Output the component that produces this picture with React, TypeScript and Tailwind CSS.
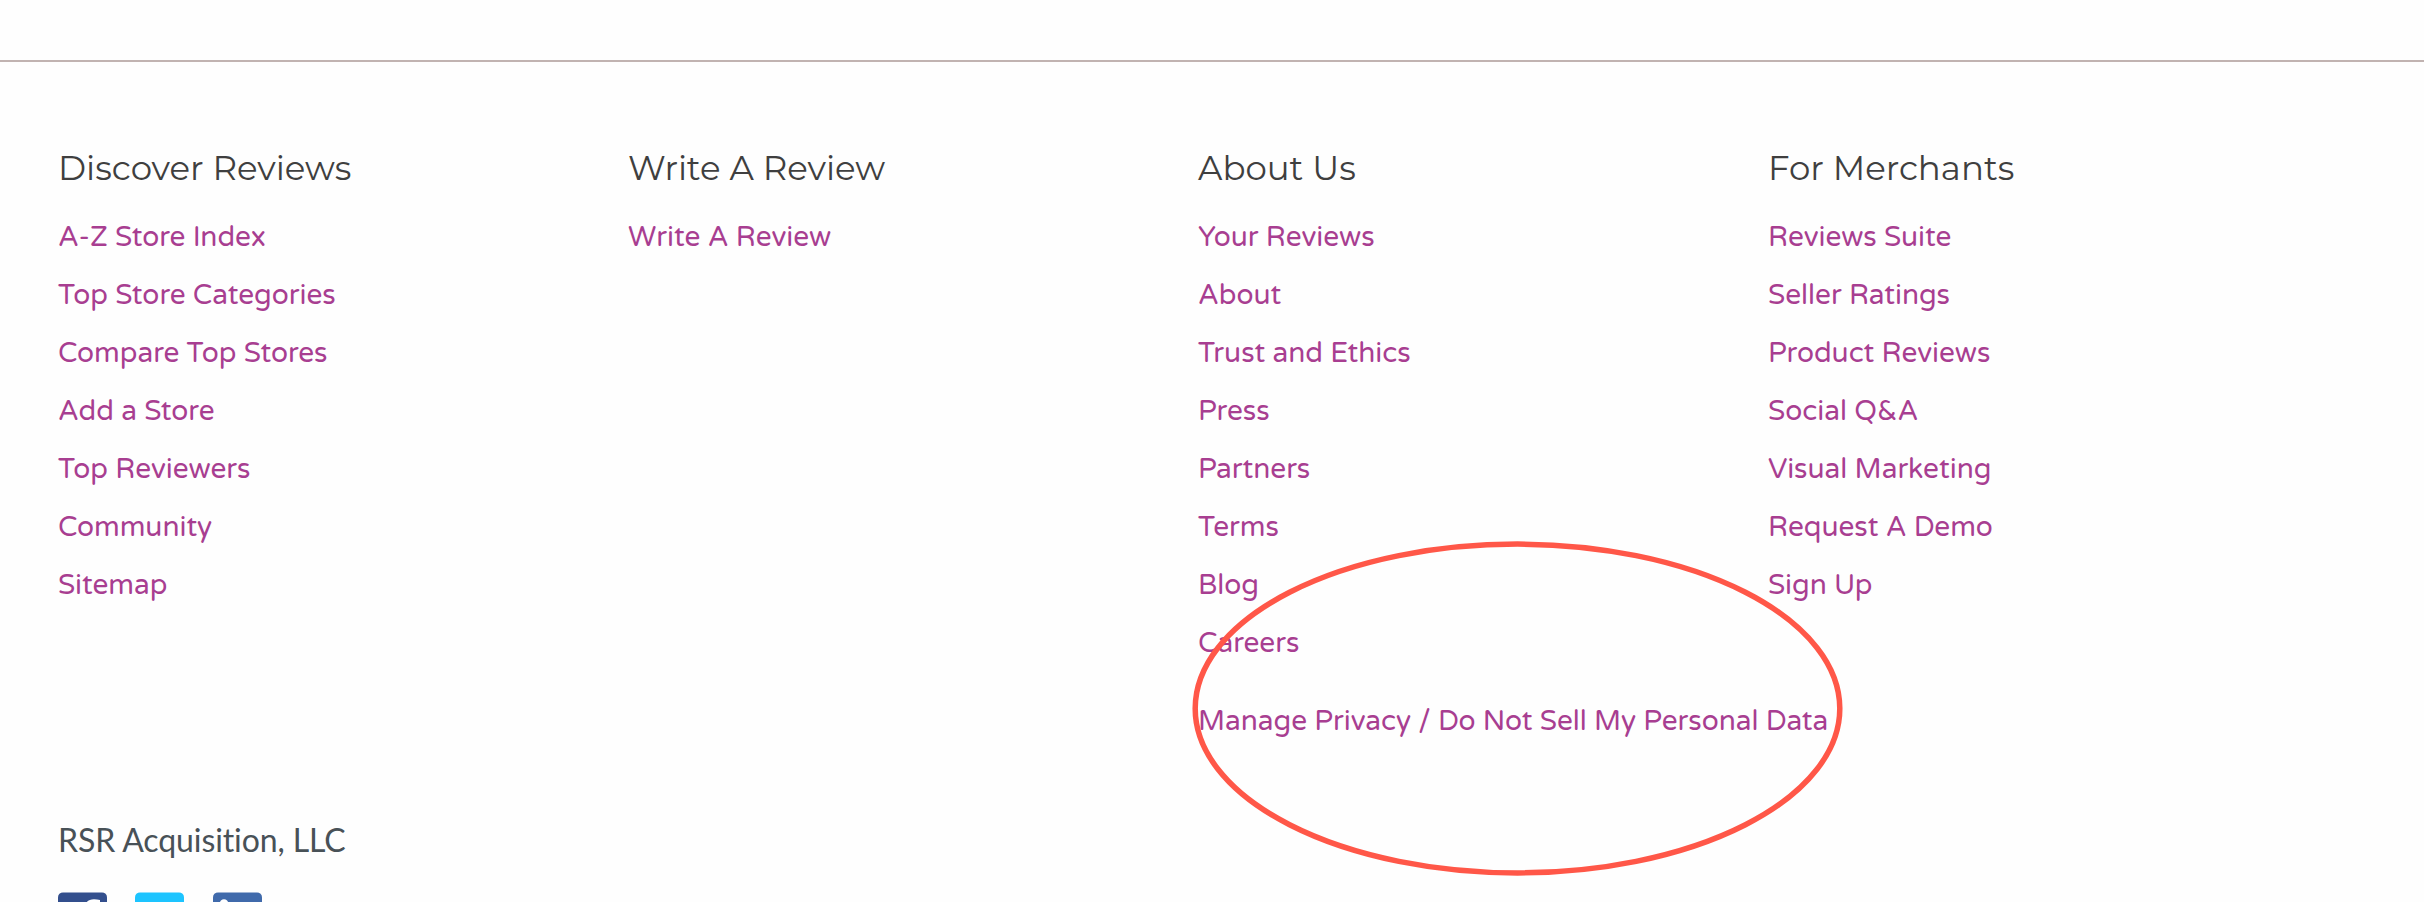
type Column = { title: string; links: string[]; extra?: string };

const columns: Column[] = [
  {
    title: "Discover Reviews",
    links: [
      "A-Z Store Index",
      "Top Store Categories",
      "Compare Top Stores",
      "Add a Store",
      "Top Reviewers",
      "Community",
      "Sitemap",
    ],
  },
  { title: "Write A Review", links: ["Write A Review"] },
  {
    title: "About Us",
    links: ["Your Reviews", "About", "Trust and Ethics", "Press", "Partners", "Terms", "Blog", "Careers"],
    extra: "Manage Privacy / Do Not Sell My Personal Data",
  },
  {
    title: "For Merchants",
    links: [
      "Reviews Suite",
      "Seller Ratings",
      "Product Reviews",
      "Social Q&A",
      "Visual Marketing",
      "Request A Demo",
      "Sign Up",
    ],
  },
];

function FooterColumn({ title, links, extra }: Column) {
  return (
    <div className="w-[570px] shrink-0">
      <h3 className="font-['Montserrat','Inter',sans-serif] text-[34px] leading-[40px] font-normal text-[#3f3f3f]">
        {title}
      </h3>
      <ul className="mt-5 font-['Varela_Round','Nunito','Noto_Sans',sans-serif] text-[28px] leading-[58px] whitespace-nowrap text-[#a83e91]">
        {links.map((link) => (
          <li key={link}>
            <a href="#">{link}</a>
          </li>
        ))}
        {extra && (
          <li className="mt-5">
            <a href="#">{extra}</a>
          </li>
        )}
      </ul>
    </div>
  );
}

function SocialIcons() {
  return (
    <div className="mt-[26px] flex gap-[28.25px]">
      <svg width="49" height="49" viewBox="0 0 49 49">
        <rect y="0.4" width="49" height="48.600" rx="5" fill="#334f8d" />
        <path d="M34 49V30h6l1-7h-7v-5c0-2 1-3.500 4-3.500h4V8c-2-.5-4-.7-6-.7-6 0-9.500 3.500-9.500 9.500V23h-6v7h6v19z" fill="#fff" />
      </svg>
      <svg width="49" height="49" viewBox="0 0 49 49">
        <rect y="0.4" width="49" height="48.600" rx="5" fill="#1dc4ff" />
        <path d="M41 16c-1 .6-2.500 1-4 1.200 1.400-.9 2.500-2.200 3-3.800-7-3-15 1-13 7-6-.3-11-3-14-7-2 3-1 7 2 9-1 0-2-.3-3-.8 0 3 2 6 5.500 6.700-1 .3-2 .3-3 .1 1 2.700 3.500 4.600 6.500 4.600C18 35.500 14 36.600 9.500 36 24 45 38 35 37.500 20c1.500-1 2.600-2.400 3.500-4z" fill="#fff" />
      </svg>
      <svg width="49" height="49" viewBox="0 0 49 49">
        <rect y="0.4" width="49" height="48.600" rx="5" fill="#406aab" />
        <circle cx="11" cy="11.600" r="4.300" fill="#fff" />
        <path d="M7.500 19h7v23h-7zM19 19h6.700v3c4-6 16-5 16 6v14h-7V30c0-7-8.700-7-8.700 0v12h-7z" fill="#fff" />
      </svg>
    </div>
  );
}

export default function App() {
  return (
    <footer className="relative h-[902px] w-[2424px] overflow-hidden bg-[#fefefe] pt-[60px]">
      <hr className="border-0 border-t-2 border-[#c1b3b1]" />
      <div className="flex h-[662px] pt-[86px] pl-[58px]">
        {columns.map((column) => (
          <FooterColumn key={column.title} {...column} />
        ))}
      </div>
      <div className="pt-[96px] pl-[58px]">
        <p className="h-[46px] font-['Lato',sans-serif] text-[32px] leading-[40px] tracking-[-0.1px] text-[#485157] [font-variant-ligatures:none]">
          RSR Acquisition, LLC
        </p>
        <SocialIcons />
      </div>
      <svg className="pointer-events-none absolute top-[540px] left-[1190px]" width="656" height="338">
        <ellipse cx="327.500" cy="168.500" rx="322.300" ry="164.400" fill="none" stroke="#ff5748" strokeWidth="5.500" />
      </svg>
    </footer>
  );
}
